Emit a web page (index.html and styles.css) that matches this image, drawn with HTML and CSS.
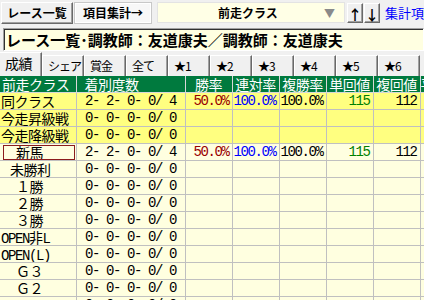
FILE: index.html
```html
<!DOCTYPE html>
<html lang="ja">
<head>
    <meta charset="UTF-8">
    <title>前走クラス集計</title>
    <link rel="stylesheet" href="styles.css">
</head>
<body>
    <div class="toolbar">
        <button class="btn btn-list">レース一覧</button>
        <button class="btn btn-item">項目集計→</button>
        <div class="combo">
            <span class="combo-text">前走クラス</span>
            <span class="combo-arrow">▼</span>
        </div>
        <button class="btn btn-arrow">↑</button>
        <button class="btn btn-arrow">↓</button>
        <span class="toolbar-link">集計項目設定</span>
    </div>

    <div class="title">レース一覧･調教師：友道康夫／調教師：友道康夫</div>

    <div class="tabs">
        <div class="tab active">成績</div>
        <div class="tab">シェア</div>
        <div class="tab">賞金</div>
        <div class="tab">全て</div>
        <div class="tab">★1</div>
        <div class="tab">★2</div>
        <div class="tab">★3</div>
        <div class="tab">★4</div>
        <div class="tab">★5</div>
        <div class="tab">★6</div>
    </div>

    <table class="grid">
        <colgroup>
            <col class="c-label">
            <col class="c-count">
            <col class="c-val">
            <col class="c-val">
            <col class="c-val">
            <col class="c-val">
            <col class="c-val">
            <col class="c-val">
        </colgroup>
        <thead>
            <tr>
                <th class="h-label">前走クラス</th>
                <th class="h-count">着別度数</th>
                <th>勝率</th>
                <th>連対率</th>
                <th>複勝率</th>
                <th>単回値</th>
                <th>複回値</th>
                <th>平均人気</th>
            </tr>
        </thead>
        <tbody>
            <tr class="hl">
                <td class="label">同クラス</td>
                <td class="count">2- 2- 0- 0/ 4</td>
                <td class="num win">50.0%</td>
                <td class="num ren">100.0%</td>
                <td class="num">100.0%</td>
                <td class="num tan">115</td>
                <td class="num">112</td>
                <td></td>
            </tr>
            <tr class="hl">
                <td class="label">今走昇級戦</td>
                <td class="count">0- 0- 0- 0/ 0</td>
                <td></td><td></td><td></td><td></td><td></td><td></td>
            </tr>
            <tr class="hl">
                <td class="label">今走降級戦</td>
                <td class="count">0- 0- 0- 0/ 0</td>
                <td></td><td></td><td></td><td></td><td></td><td></td>
            </tr>
            <tr>
                <td class="label selected ind-2">新馬</td>
                <td class="count">2- 2- 0- 0/ 4</td>
                <td class="num win">50.0%</td>
                <td class="num ren">100.0%</td>
                <td class="num">100.0%</td>
                <td class="num tan">115</td>
                <td class="num">112</td>
                <td></td>
            </tr>
            <tr>
                <td class="label ind-1">未勝利</td>
                <td class="count">0- 0- 0- 0/ 0</td>
                <td></td><td></td><td></td><td></td><td></td><td></td>
            </tr>
            <tr>
                <td class="label ind-3">１勝</td>
                <td class="count">0- 0- 0- 0/ 0</td>
                <td></td><td></td><td></td><td></td><td></td><td></td>
            </tr>
            <tr>
                <td class="label ind-3">２勝</td>
                <td class="count">0- 0- 0- 0/ 0</td>
                <td></td><td></td><td></td><td></td><td></td><td></td>
            </tr>
            <tr>
                <td class="label ind-3">３勝</td>
                <td class="count">0- 0- 0- 0/ 0</td>
                <td></td><td></td><td></td><td></td><td></td><td></td>
            </tr>
            <tr>
                <td class="label"><span class="latin">OPEN</span>非<span class="latin">L</span></td>
                <td class="count">0- 0- 0- 0/ 0</td>
                <td></td><td></td><td></td><td></td><td></td><td></td>
            </tr>
            <tr>
                <td class="label"><span class="latin">OPEN(L)</span></td>
                <td class="count">0- 0- 0- 0/ 0</td>
                <td></td><td></td><td></td><td></td><td></td><td></td>
            </tr>
            <tr>
                <td class="label ind-3">Ｇ３</td>
                <td class="count">0- 0- 0- 0/ 0</td>
                <td></td><td></td><td></td><td></td><td></td><td></td>
            </tr>
            <tr>
                <td class="label ind-3">Ｇ２</td>
                <td class="count">0- 0- 0- 0/ 0</td>
                <td></td><td></td><td></td><td></td><td></td><td></td>
            </tr>
            <tr>
                <td class="label ind-3">Ｇ１</td>
                <td class="count">0- 0- 0- 0/ 0</td>
                <td></td><td></td><td></td><td></td><td></td><td></td>
            </tr>
        </tbody>
    </table>
</body>
</html>
```

FILE: styles.css
```css
body {
    margin: 0;
    width: 424px;
    height: 300px;
    overflow: hidden;
    background: #f0f0f0;
    font-family: "Noto Sans CJK JP", sans-serif;
    color: #000;
}

/* toolbar */
.toolbar {
    display: flex;
    align-items: center;
    height: 25px;
    padding-left: 1px;
    white-space: nowrap;
    overflow: hidden;
}
.toolbar > * {
    flex-shrink: 0;
}
.btn {
    box-sizing: border-box;
    height: 22px;
    padding: 0;
    font-family: "Noto Sans CJK JP", sans-serif;
    font-weight: bold;
    font-size: 12px;
    color: #000;
    background: #f0f0f0;
    border: 1px solid;
    border-color: #fff #696969 #696969 #fff;
    box-shadow: inset -1px -1px #a0a0a0;
}
.btn-list {
    width: 72px;
}
.btn-item {
    width: 78px;
    margin-left: 1px;
    background: #f7f7f7;
    border-color: #c8c8c8;
    box-shadow: inset 0 0 0 1px #fff;
}
.combo {
    box-sizing: border-box;
    display: flex;
    align-items: center;
    width: 188px;
    height: 21px;
    margin-left: 5px;
    background: #ffffe6;
    border: 1px solid #e3e3e3;
}
.combo-text {
    flex: 1;
    text-align: center;
    padding-left: 14px;
    font-weight: bold;
    font-size: 12px;
}
.combo-arrow {
    width: 20px;
    color: #8a8a8a;
    font-size: 11px;
}
.btn-arrow {
    width: 16px;
    height: 20px;
    font-size: 14px;
    margin-left: 2px;
}
.toolbar .btn-arrow + .btn-arrow {
    margin-left: 1px;
}
.toolbar-link {
    margin-left: 5px;
    color: #0000ff;
    font-size: 13px;
}

/* title */
.title {
    box-sizing: border-box;
    height: 23px;
    margin: 3px 0 0 3px;
    padding-left: 2px;
    background: #ffffe1;
    border: 1px solid;
    border-color: #a0a0a0 #fff #fff #a0a0a0;
    box-shadow: inset 1px 1px #303030;
    font-weight: bold;
    font-size: 15px;
    line-height: 21px;
    white-space: nowrap;
    overflow: hidden;
}

/* tabs */
.tabs {
    display: flex;
    align-items: flex-end;
    height: 24px;
    margin-top: 1px;
}
.tab {
    box-sizing: border-box;
    flex: 0 0 42px;
    height: 21px;
    padding-left: 5px;
    border-top: 1px solid #fff;
    border-left: 1px solid #fff;
    border-right: 1px solid #696969;
    box-shadow: inset -1px 0 #a0a0a0;
    font-size: 12px;
    letter-spacing: -1px;
    line-height: 19px;
    white-space: nowrap;
}
.tab.active {
    height: 24px;
    padding-left: 5px;
    font-size: 14px;
    letter-spacing: -0.5px;
    line-height: 20px;
    border-left: 0;
}

/* grid */
.grid {
    border-collapse: collapse;
    table-layout: fixed;
    width: 467px;
    font-size: 14px;
}
.c-label {
    width: 76px;
}
.c-count {
    width: 109px;
}
.c-val {
    width: 47px;
}
.grid th,
.grid td {
    height: 16px;
    padding: 0;
    line-height: 16px;
    border: 1px solid #c0c0c0;
    white-space: nowrap;
    overflow: hidden;
}
.grid thead th {
    border-top: 0;
}
.grid th:first-child,
.grid td:first-child {
    border-left: 0;
}
.grid th {
    background: #007a3e;
    color: #fff;
    font-weight: normal;
    text-align: center;
    letter-spacing: -0.5px;
    border-color: #d8d8d8;
}
.grid th.h-label {
    text-align: left;
    padding-left: 2px;
}
.grid th.h-count {
    text-align: left;
    padding-left: 8px;
}
.grid td {
    background: #ffffe0;
}
.grid tr.hl td {
    background: #ffff80;
}
.grid td.label {
    padding-left: 1px;
    letter-spacing: -0.5px;
}
.grid td.ind-1 {
    padding-left: 10px;
}
.grid td.ind-2 {
    padding-left: 16px;
}
.grid td.ind-3 {
    padding-left: 16px;
}
.latin,
.count,
.num {
    font-family: "Liberation Mono", monospace;
    letter-spacing: -1.4px;
}
.grid td .latin {
    line-height: 10px;
    letter-spacing: -1.4px;
}
.grid td.count {
    text-align: center;
    white-space: pre;
}
.grid td.num {
    text-align: right;
    padding-right: 3px;
}
.win {
    color: #990000;
}
.ren {
    color: #0000ff;
}
.tan {
    color: #008000;
}
.selected {
    position: relative;
}
.selected::after {
    content: "";
    position: absolute;
    left: 3px;
    top: 1px;
    right: 1px;
    bottom: 0;
    border: 1px solid #8b1c1c;
}
```
